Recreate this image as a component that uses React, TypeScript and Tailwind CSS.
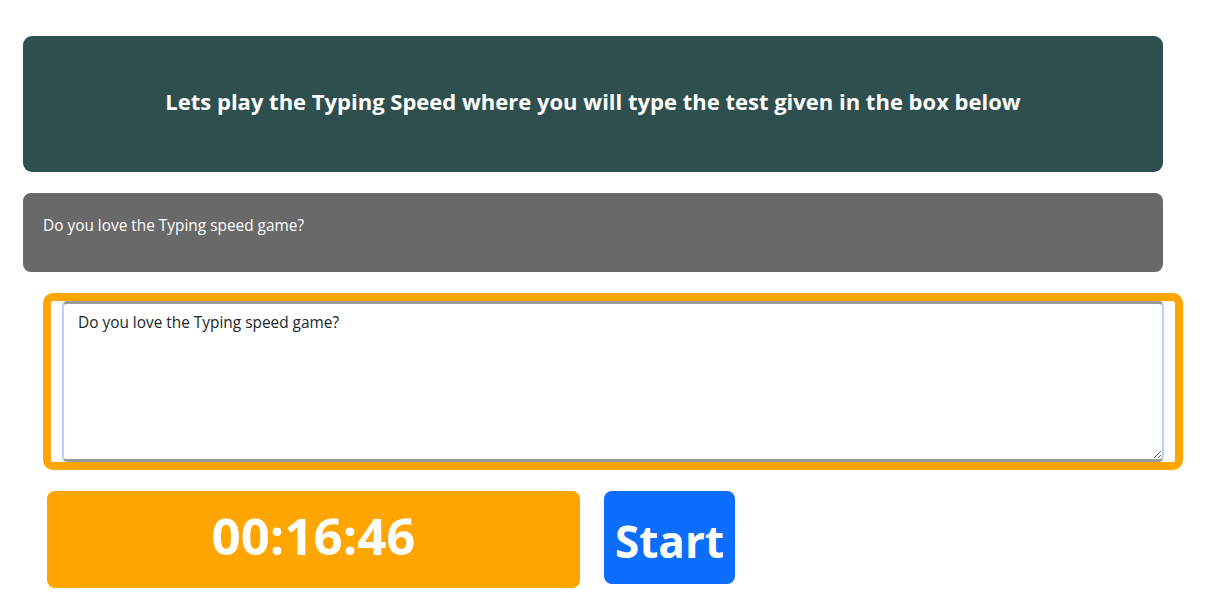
export default function App() {
  return (
    <div className="min-h-screen bg-white pt-9 pl-[23px] font-['Open_Sans',sans-serif]">
      <div className="w-[1140px] h-[136px] rounded-[9px] bg-[#2f4f4f] flex items-center justify-center pb-[6px]">
        <h1 className="text-white font-bold text-[22px] text-center">
          Lets play the Typing Speed where you will type the test given in the box below
        </h1>
      </div>

      <div className="mt-[21px] w-[1140px] h-[79px] rounded-[8px] bg-[#696969] px-5 pt-[21px]">
        <p className="text-white text-[15.4px]">Do you love the Typing speed game?</p>
      </div>

      <div className="mt-[21px] ml-5 w-[1140px] h-[177px] border-[8px] border-[#ffa500] rounded-[10px] px-[11px]">
        <textarea
          className="block w-full h-[161px] bg-white rounded-[5px] border-x-2 border-x-[#b6d3f7] border-t-[3px] border-t-[#9a9a9a] border-b-[3px] border-b-[#9a9a9a] px-[14px] py-[7px] text-[15.4px] text-[#212529] outline-none resize-y"
          defaultValue="Do you love the Typing speed game?"
        />
      </div>

      <div className="mt-[21px] ml-6 flex items-start gap-6">
        <div className="w-[533px] h-[97px] rounded-[8px] bg-[#ffa500] flex items-center justify-center pb-2">
          <span className="text-white font-bold text-[51px] leading-none">00:16:46</span>
        </div>
        <button className="w-[131px] h-[93px] rounded-[8px] bg-[#0d6efd] text-white font-bold text-[44px] leading-none flex items-center justify-center pt-[6px]">
          Start
        </button>
      </div>
    </div>
  );
}
